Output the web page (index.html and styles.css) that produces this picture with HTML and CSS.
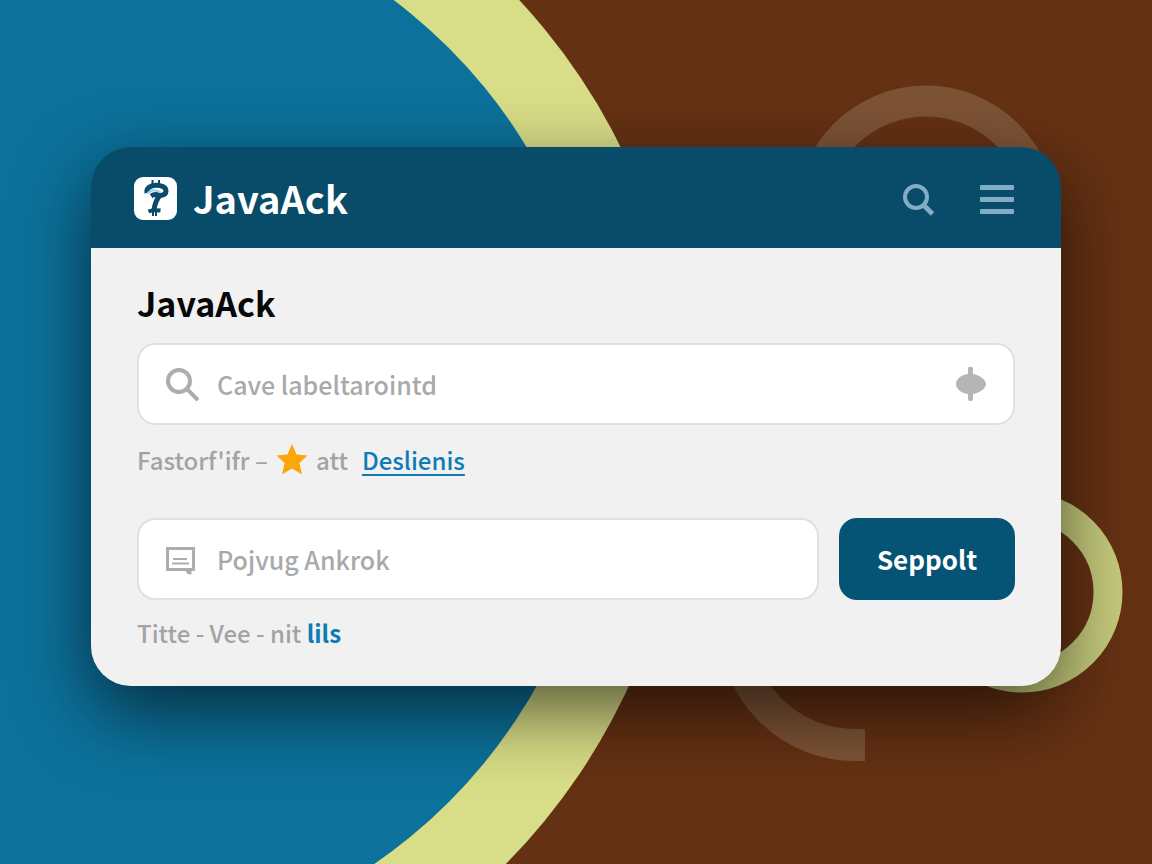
FILE: index.html
```html
<!DOCTYPE html>
<html lang="en">
<head>
<meta charset="utf-8">
<meta name="viewport" content="width=device-width, initial-scale=1">
<title>JavaAck</title>
<link rel="stylesheet" href="styles.css">
</head>
<body>
<div class="stage">
  <svg class="backdrop" viewBox="0 0 1152 864" preserveAspectRatio="xMidYMid slice" aria-hidden="true">
    <rect width="1152" height="864" fill="#653113"/>
    <circle cx="61" cy="425" r="625" fill="#d8dd87"/>
    <circle cx="72" cy="425" r="533" fill="#0c719b"/>
    <circle cx="926" cy="216" r="115" fill="none" stroke="#7d5336" stroke-width="31"/>
    <path d="M865 745H855A120 120 0 0 1 735 625" fill="none" stroke="#7d5336" stroke-width="32"/>
    <circle cx="1022" cy="592" r="86" fill="none" stroke="#c5ca7b" stroke-width="29"/>
  </svg>
  <main class="card">
    <header class="topbar">
      <a class="brand" href="#">
        <svg class="brand-mark" viewBox="0 0 44 44" aria-hidden="true">
          <rect y="1" width="43" height="43" rx="9" fill="#fff"/>
          <g fill="none" stroke="#0b4a68">
            <path d="M18.500 4v5M25 4v5" stroke-width="2"/>
            <path d="M13 17c-2-10 19-10 19-2 0 3-2 4-5 4.500" stroke-width="5"/>
            <path d="M17 20q4-2.500 9-.500c-4 4-5 8-6 14" stroke-width="5"/>
            <path d="M14.500 35.500q4-2 12-1" stroke-width="4"/>
            <path d="M19 36v4M22 36v4" stroke-width="2"/>
            <path d="M13.500 17.500c3-4 8-4 13-1" stroke="#8ed2ea" stroke-width="2"/>
          </g>
        </svg>
        <span>JavaAck</span>
      </a>
      <nav class="tools" aria-label="Tools">
        <button class="tool" type="button" aria-label="Search">
          <svg width="34" height="34" viewBox="0 0 34 34" fill="none" stroke="#82aec4" stroke-width="4"><circle cx="14" cy="14" r="11"/><path d="M21.500 22l9 9" stroke-width="5"/></svg>
        </button>
        <button class="tool" type="button" aria-label="Menu">
          <svg width="36" height="32" viewBox="0 0 36 32" fill="#82aec4"><rect x="1" y="1" width="34" height="5" rx="1"/><rect x="1" y="13" width="34" height="5" rx="1"/><rect x="1" y="25" width="34" height="5" rx="1"/></svg>
        </button>
      </nav>
    </header>
    <form class="content">
      <h1 class="title">JavaAck</h1>
      <div class="field">
        <svg width="34" height="38" viewBox="0 -3 34 38" fill="none" stroke="#adadad" stroke-width="4" aria-hidden="true"><circle cx="14" cy="13" r="11"/><path d="M22 21l11 11"/></svg>
        <input class="entry" type="text" aria-label="Search" placeholder="Cave labeltarointd">
        <svg width="32" height="36" viewBox="0 0 32 36" fill="#b5b5b5" aria-hidden="true"><path d="M13 8V2q0-1 1-1h3q1 0 1 1v6c7 1 13 6 13 10s-6 9-13 10v5q0 2-2 2h-1q-2 0-2-2v-5C6 27 1 23 1 18S6 9 13 8Z"/></svg>
      </div>
      <p class="hint">
        <span>Fastorf'ifr –</span>
        <svg width="32" height="32" viewBox="0 0 32 32" fill="#fba70b" aria-hidden="true"><path d="M16 0l4.500 10.500 11 1-8 7.500 2.500 11.500-10-6-10 6 2.500-11.500-8-7.500 11-1Z"/></svg>
        <span>att</span>
        <a class="more" href="#">Deslienis</a>
      </p>
      <div class="row">
        <div class="field">
          <svg width="34" height="34" viewBox="0 0 34 34" fill="none" stroke="#adadad" aria-hidden="true"><path d="M2.500 6.500h26v21h-26Z" stroke-width="3"/><path d="M8 17h14M7 21.500h17" stroke-width="2"/><path d="M20 28h6v4h-2l-2-1" fill="#adadad" stroke-width="1"/></svg>
          <input class="entry" type="text" aria-label="Details" placeholder="Pojvug Ankrok">
        </div>
        <button class="submit" type="submit">Seppolt</button>
      </div>
      <p class="hint hint-last"><span>Titte - Vee - nit <a class="lils" href="#">lils</a></span></p>
    </form>
  </main>
</div>
</body>
</html>
```

FILE: styles.css
```css
* {
  box-sizing: border-box;
}

body {
  margin: 0;
  font-family: "Noto Sans CJK SC", "Noto Sans", sans-serif;
  font-weight: 500;
  color: #a3a3a3;
}

.stage {
  position: relative;
  min-height: 100vh;
  padding: 147px 91px;
  overflow: hidden;
}

.backdrop {
  position: absolute;
  inset: 0;
  width: 100%;
  height: 100%;
}

.card {
  position: relative;
  border-radius: 40px;
  box-shadow: 0 26px 72px rgba(0, 0, 0, 0.6);
}

.topbar {
  display: flex;
  align-items: center;
  justify-content: space-between;
  padding: 24px 46px 24px 43px;
  border-radius: 40px 40px 0 0;
  background: #084c6a;
}

.brand {
  display: flex;
  align-items: center;
  gap: 15px;
  color: #fff;
  font-size: 38px;
  font-weight: 700;
  line-height: 53px;
  text-decoration: none;
}

.brand-mark {
  width: 44px;
  height: 44px;
}

.tools {
  display: flex;
  align-items: center;
  gap: 43px;
  padding-top: 4px;
}

.tool {
  display: flex;
  padding: 0;
  border: 0;
  background: none;
}

.content {
  padding: 31px 46px 37px;
  border-radius: 0 0 40px 40px;
  background: #f1f1f1;
}

.title {
  margin: 0 0 16px;
  color: #080808;
  font-size: 34px;
  font-weight: 700;
  line-height: 48px;
}

.field {
  display: flex;
  flex: 1;
  align-items: center;
  gap: 18px;
  min-width: 0;
  height: 82px;
  padding: 0 26px;
  border: 2px solid #e0e0e0;
  border-radius: 18px;
  background: #fff;
}

.field svg {
  flex: none;
}

.entry {
  flex: 1;
  min-width: 0;
  padding: 0;
  border: 0;
  outline: 0;
  background: none;
  color: #555;
  font: inherit;
  font-size: 25px;
  line-height: 36px;
}

.entry::placeholder {
  color: #a9a9a9;
  opacity: 1;
}

.hint {
  display: flex;
  align-items: center;
  gap: 8px;
  margin: 19px 0 42px;
  font-size: 24px;
  line-height: 32px;
}

.hint-last {
  margin: 17px 0 0;
}

.more {
  margin-left: 6px;
  color: #0b7cb5;
  text-decoration-thickness: 2px;
  text-underline-offset: 4px;
}

.lils {
  color: #0b7cb5;
  font-weight: 700;
  text-decoration: none;
}

.row {
  display: flex;
  gap: 20px;
}

.submit {
  width: 176px;
  border: 0;
  border-radius: 18px;
  background: #065475;
  color: #fff;
  font: inherit;
  font-size: 26px;
  font-weight: 700;
  line-height: 36px;
}
```
